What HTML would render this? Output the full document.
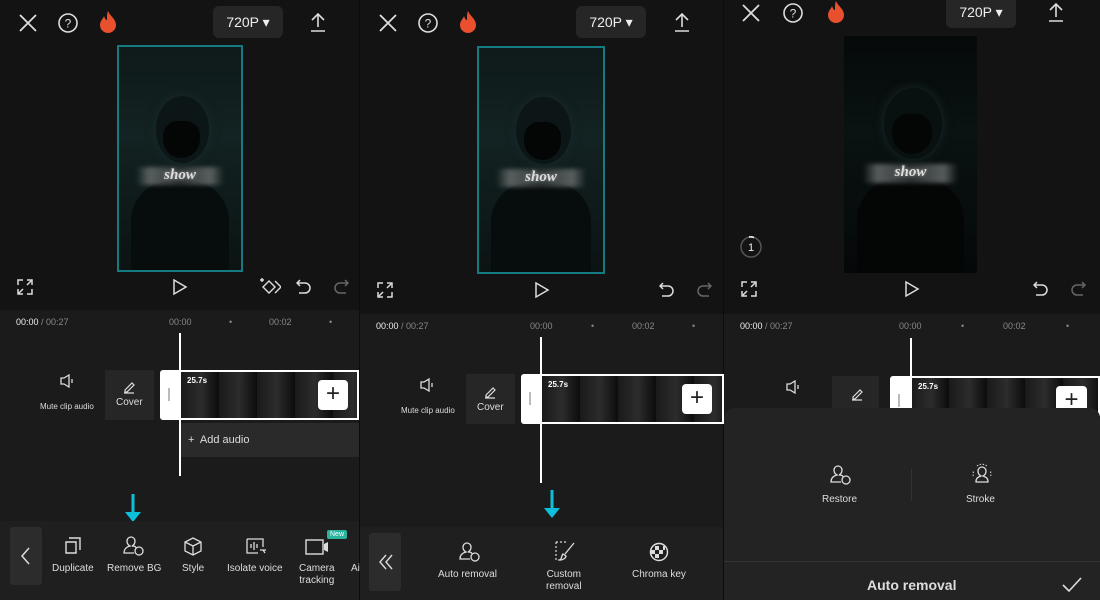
<!DOCTYPE html>
<html><head><meta charset="utf-8"><style>
*{margin:0;padding:0;box-sizing:border-box}
body{width:1100px;height:600px;background:#131313;font-family:"Liberation Sans",sans-serif;color:#ddd;position:relative;overflow:hidden}
.a{position:absolute}
.tl{background:#1b1b1b}
.t{font-size:9px;color:#888}
.lbl{font-size:10px;color:#ddd;text-align:center;position:absolute;white-space:nowrap}
.res{background:#262626;border-radius:6px;color:#eee;font-size:14px;text-align:center;line-height:32px;width:70px;height:32px}
.vid{background:linear-gradient(180deg,#0f1a1a 0%,#132222 40%,#0b1313 100%);overflow:hidden}
.head{position:absolute;left:30%;top:22%;width:44%;height:30%;border-radius:50%;background:#0d1616;box-shadow:0 0 10px #1a2a2a}
.mask{position:absolute;left:36%;top:33%;width:30%;height:17%;border-radius:40% 40% 50% 50%;background:#040606}
.bar{position:absolute;left:14%;top:54%;width:72%;height:8%;background:linear-gradient(90deg,transparent,#6a6f6f 15%,#3a3f3f 50%,#6a6f6f 85%,transparent);filter:blur(2px);opacity:.8}
.show{position:absolute;font:italic bold 15px "Liberation Serif",serif;color:#ddd;text-align:center;width:100%;top:54%;text-shadow:0 0 3px #999}
.body{position:absolute;left:10%;top:60%;width:80%;height:45%;background:#070c0c;border-radius:40% 40% 0 0}
.clip{background:repeating-linear-gradient(90deg,#1a1a1a 0,#2c2c2c 20px,#0c0c0c 38px);border:2px solid #fff;border-left:none}
.plus{background:#fff;border-radius:4px;width:28px;height:28px;color:#222;font-size:24px;text-align:center;line-height:27px}
.handle{background:#fff;border-radius:3px 0 0 3px}
svg{position:absolute}
</style></head><body>

<div class="a tl" style="left:0;top:310px;width:359px;height:217px"></div>
<div class="a tl" style="top:314px;left:360px;width:364px;height:213px"></div>
<div class="a tl" style="left:724px;top:314px;width:376px;height:100px"></div>
<div class="a" style="left:359px;top:0;width:1px;height:600px;background:#0c0c0c"></div>
<div class="a" style="left:723px;top:0;width:1px;height:600px;background:#0c0c0c"></div>

<!-- ========== PANEL 1 ========== -->
<svg style="left:18px;top:13px" width="20" height="20"><path d="M2 2L18 18M18 2L2 18" stroke="#ddd" stroke-width="1.8"/></svg>
<svg style="left:57px;top:12px" width="22" height="22"><circle cx="11" cy="11" r="9" fill="none" stroke="#ddd" stroke-width="1.6"/><text x="11" y="15.5" font-size="12" fill="#ddd" text-anchor="middle" font-family="Liberation Sans">?</text></svg>
<svg style="left:97px;top:10px" width="22" height="24"><path d="M11 1C13 6 19 9 19 15A8 8 0 0 1 3 15C3 11 6 9 7 6C8 9 9 10 10 10C10 6 10 3 11 1Z" fill="#e8502e"/></svg>
<div class="a res" style="left:213px;top:6px">720P ▾</div>
<svg style="left:308px;top:11px" width="20" height="22"><path d="M10 3V16M4 9L10 3L16 9M3 20H17" stroke="#ddd" stroke-width="1.6" fill="none"/></svg>
<div class="a vid" style="left:117px;top:45px;width:126px;height:227px;border:2px solid #157a82"><div class="head"></div><div class="mask"></div><div class="body"></div><div class="bar"></div><div class="show">show</div></div>
<svg style="left:17px;top:279px" width="16" height="16"><path d="M1 6V1H6M10 1H15V6M15 10V15H10M6 15H1V10M2 14L6 10M14 2L10 6" stroke="#ddd" stroke-width="1.5" fill="none"/></svg>
<svg style="left:172px;top:278px" width="16" height="18"><path d="M2 2L14 9L2 16Z" stroke="#ddd" stroke-width="1.5" fill="none"/></svg>
<svg style="left:259px;top:277px" width="22" height="18"><path d="M10 4L16 10L10 16L4 10Z M16 4L22 10L16 16M3 1V5M1 3H5" stroke="#ddd" stroke-width="1.4" fill="none"/></svg>
<svg style="left:296px;top:278px" width="16" height="16"><path d="M4 2L1 5L4 8M1 5H9A5 5 0 0 1 9 15H3" stroke="#ddd" stroke-width="1.5" fill="none"/></svg>
<svg style="left:333px;top:278px" width="16" height="16"><path d="M12 2L15 5L12 8M15 5H7A5 5 0 0 0 7 15H13" stroke="#666" stroke-width="1.5" fill="none"/></svg>
<div class="a t" style="left:16px;top:317px"><span style="color:#eee">00:00</span> / 00:27</div>
<div class="a t" style="left:169px;top:317px">00:00</div><div class="a t" style="left:229px;top:317px">•</div>
<div class="a t" style="left:269px;top:317px">00:02</div><div class="a t" style="left:329px;top:317px">•</div>
<svg style="left:60px;top:374px" width="16" height="14"><path d="M1 4H4L9 1V13L4 10H1Z M12 5V9" stroke="#ddd" stroke-width="1.3" fill="none"/></svg>
<div class="lbl" style="left:40px;top:402px;font-size:8px">Mute clip audio</div>
<div class="a" style="left:105px;top:370px;width:49px;height:50px;background:#262626"></div>
<svg style="left:122px;top:380px" width="14" height="14"><path d="M3 10L10 3L12 5L5 12H3Z M2 13H12" stroke="#ddd" stroke-width="1.2" fill="none"/></svg>
<div class="lbl" style="left:116px;top:397px">Cover</div>
<div class="a handle" style="left:160px;top:370px;width:22px;height:50px"><div class="a" style="left:8px;top:18px;width:2px;height:13px;background:#bbb"></div></div>
<div class="a clip" style="left:181px;top:370px;width:178px;height:50px"></div>
<div class="a" style="left:187px;top:376px;font-size:8px;color:#fff;font-weight:bold">25.7s</div>
<div class="a plus" style="left:318px;top:380px;width:30px;height:30px">+</div>
<div class="a" style="left:181px;top:423px;width:178px;height:34px;background:#2a2a2a;font-size:11px;color:#ddd;line-height:34px;padding-left:7px">+&nbsp; Add audio</div>
<div class="a" style="left:179px;top:333px;width:2px;height:143px;background:#fff"></div>
<svg style="left:124px;top:494px" width="18" height="32"><path d="M9 0V20" stroke="#0cc0dc" stroke-width="3"/><path d="M1 18H17L9 28Z" fill="#0cc0dc"/></svg>
<div class="a" style="left:0;top:521px;width:359px;height:79px;background:#1f1f1f"></div>
<div class="a" style="left:10px;top:527px;width:32px;height:58px;background:#2c2c2c;border-radius:3px"></div>
<svg style="left:20px;top:547px" width="12" height="18"><path d="M9 1L2 9L9 17" stroke="#ddd" stroke-width="1.5" fill="none"/></svg>
<svg style="left:64px;top:537px" width="18" height="18"><path d="M5 1H16V13M2 5H12V16H2Z" stroke="#ddd" stroke-width="1.4" fill="none"/></svg>
<div class="lbl" style="left:52px;top:563px">Duplicate</div>
<svg style="left:121px;top:535px" width="24" height="22"><path d="M10 2A4 4 0 0 1 14 6C14 8 13 10 11 11C14 11 15 12 15 13M10 2A4 4 0 0 0 6 6C6 8 7 10 9 11C5 12 3 14 3 18H13" stroke="#ddd" stroke-width="1.3" fill="none"/><circle cx="18" cy="16" r="4" fill="none" stroke="#ddd" stroke-width="1.3"/></svg>
<div class="lbl" style="left:107px;top:563px">Remove BG</div>
<svg style="left:183px;top:537px" width="20" height="20"><path d="M10 1L18 5V14L10 18L2 14V5Z M2 5L10 9L18 5M10 9V18" stroke="#ddd" stroke-width="1.3" fill="none"/></svg>
<div class="lbl" style="left:182px;top:563px">Style</div>
<svg style="left:245px;top:537px" width="22" height="20"><path d="M2 2H18V10M2 2V16H13M6 7V11M9 5V13M12 7V11M15 13H21M18 13L20 16" stroke="#ddd" stroke-width="1.3" fill="none"/></svg>
<div class="lbl" style="left:227px;top:563px">Isolate voice</div>
<svg style="left:305px;top:538px" width="24" height="18"><rect x="1" y="2" width="17" height="14" fill="none" stroke="#ddd" stroke-width="1.4"/><path d="M19 6L23 4V14L19 12Z" fill="#ddd"/></svg>
<div class="a" style="left:327px;top:530px;font-size:7px;background:#2bb39e;color:#fff;padding:1px 3px;border-radius:2px">New</div>
<div class="lbl" style="left:299px;top:563px;line-height:12px">Camera<br>tracking</div>
<div class="lbl" style="left:351px;top:563px">Ai</div>

<!-- ========== PANEL 2 ========== -->
<svg style="left:378px;top:13px" width="20" height="20"><path d="M2 2L18 18M18 2L2 18" stroke="#ddd" stroke-width="1.8"/></svg>
<svg style="left:417px;top:12px" width="22" height="22"><circle cx="11" cy="11" r="9" fill="none" stroke="#ddd" stroke-width="1.6"/><text x="11" y="15.5" font-size="12" fill="#ddd" text-anchor="middle" font-family="Liberation Sans">?</text></svg>
<svg style="left:457px;top:10px" width="22" height="24"><path d="M11 1C13 6 19 9 19 15A8 8 0 0 1 3 15C3 11 6 9 7 6C8 9 9 10 10 10C10 6 10 3 11 1Z" fill="#e8502e"/></svg>
<div class="a res" style="left:576px;top:6px">720P ▾</div>
<svg style="left:672px;top:11px" width="20" height="22"><path d="M10 3V16M4 9L10 3L16 9M3 20H17" stroke="#ddd" stroke-width="1.6" fill="none"/></svg>
<div class="a vid" style="left:477px;top:46px;width:128px;height:228px;border:2px solid #157a82"><div class="head"></div><div class="mask"></div><div class="body"></div><div class="bar"></div><div class="show">show</div></div>
<svg style="left:377px;top:282px" width="16" height="16"><path d="M1 6V1H6M10 1H15V6M15 10V15H10M6 15H1V10M2 14L6 10M14 2L10 6" stroke="#ddd" stroke-width="1.5" fill="none"/></svg>
<svg style="left:534px;top:281px" width="16" height="18"><path d="M2 2L14 9L2 16Z" stroke="#ddd" stroke-width="1.5" fill="none"/></svg>
<svg style="left:659px;top:281px" width="16" height="16"><path d="M4 2L1 5L4 8M1 5H9A5 5 0 0 1 9 15H3" stroke="#ddd" stroke-width="1.5" fill="none"/></svg>
<svg style="left:696px;top:281px" width="16" height="16"><path d="M12 2L15 5L12 8M15 5H7A5 5 0 0 0 7 15H13" stroke="#666" stroke-width="1.5" fill="none"/></svg>
<div class="a t" style="left:376px;top:321px"><span style="color:#eee">00:00</span> / 00:27</div>
<div class="a t" style="left:530px;top:321px">00:00</div><div class="a t" style="left:591px;top:321px">•</div>
<div class="a t" style="left:632px;top:321px">00:02</div><div class="a t" style="left:692px;top:321px">•</div>
<svg style="left:420px;top:378px" width="16" height="14"><path d="M1 4H4L9 1V13L4 10H1Z M12 5V9" stroke="#ddd" stroke-width="1.3" fill="none"/></svg>
<div class="lbl" style="left:401px;top:406px;font-size:8px">Mute clip audio</div>
<div class="a" style="left:466px;top:374px;width:49px;height:50px;background:#262626"></div>
<svg style="left:483px;top:385px" width="14" height="14"><path d="M3 10L10 3L12 5L5 12H3Z M2 13H12" stroke="#ddd" stroke-width="1.2" fill="none"/></svg>
<div class="lbl" style="left:477px;top:402px">Cover</div>
<div class="a handle" style="left:521px;top:374px;width:22px;height:50px"><div class="a" style="left:8px;top:18px;width:2px;height:13px;background:#bbb"></div></div>
<div class="a clip" style="left:542px;top:374px;width:182px;height:50px"></div>
<div class="a" style="left:548px;top:380px;font-size:8px;color:#fff;font-weight:bold">25.7s</div>
<div class="a plus" style="left:682px;top:384px;width:30px;height:30px">+</div>
<div class="a" style="left:540px;top:337px;width:2px;height:146px;background:#fff"></div>
<svg style="left:543px;top:490px" width="18" height="32"><path d="M9 0V20" stroke="#0cc0dc" stroke-width="3"/><path d="M1 18H17L9 28Z" fill="#0cc0dc"/></svg>
<div class="a" style="left:360px;top:527px;width:363px;height:73px;background:#1f1f1f"></div>
<div class="a" style="left:369px;top:533px;width:32px;height:58px;background:#2c2c2c;border-radius:3px"></div>
<svg style="left:378px;top:554px" width="16" height="16"><path d="M8 1L2 8L8 15M14 1L8 8L14 15" stroke="#ddd" stroke-width="1.4" fill="none"/></svg>
<svg style="left:457px;top:541px" width="24" height="22"><path d="M10 2A4 4 0 0 1 14 6C14 8 13 10 11 11C14 11 15 12 15 13M10 2A4 4 0 0 0 6 6C6 8 7 10 9 11C5 12 3 14 3 18H13" stroke="#ddd" stroke-width="1.3" fill="none"/><circle cx="18" cy="16" r="4" fill="none" stroke="#ddd" stroke-width="1.3"/></svg>
<div class="lbl" style="left:438px;top:569px">Auto removal</div>
<svg style="left:554px;top:540px" width="22" height="22"><path d="M2 2H14M2 2V20H8" stroke="#ddd" stroke-width="1.2" stroke-dasharray="2 2" fill="none"/><path d="M20 3L11 14M9 14C7 16 8 19 6 20C9 20 12 18 12 16Z" stroke="#ddd" stroke-width="1.3" fill="none"/></svg>
<div class="lbl" style="left:546px;top:569px;line-height:12px">Custom<br>removal</div>
<svg style="left:649px;top:542px" width="20" height="20"><circle cx="10" cy="10" r="8.5" fill="none" stroke="#ddd" stroke-width="1.5"/><path d="M6 4H10V8H6ZM10 8H14V12H10ZM6 12H10V16H6ZM2 8H6V12H2ZM14 4H16V8H14Z" fill="#ddd"/></svg>
<div class="lbl" style="left:632px;top:569px">Chroma key</div>

<!-- ========== PANEL 3 ========== -->
<svg style="left:741px;top:3px" width="20" height="20"><path d="M2 2L18 18M18 2L2 18" stroke="#ddd" stroke-width="1.8"/></svg>
<svg style="left:782px;top:2px" width="22" height="22"><circle cx="11" cy="11" r="9" fill="none" stroke="#ddd" stroke-width="1.6"/><text x="11" y="15.5" font-size="12" fill="#ddd" text-anchor="middle" font-family="Liberation Sans">?</text></svg>
<svg style="left:825px;top:0px" width="22" height="24"><path d="M11 1C13 6 19 9 19 15A8 8 0 0 1 3 15C3 11 6 9 7 6C8 9 9 10 10 10C10 6 10 3 11 1Z" fill="#e8502e"/></svg>
<div class="a res" style="left:946px;top:-4px;height:32px;line-height:32px">720P ▾</div>
<svg style="left:1046px;top:1px" width="20" height="22"><path d="M10 3V16M4 9L10 3L16 9M3 20H17" stroke="#ddd" stroke-width="1.6" fill="none"/></svg>
<div class="a vid" style="left:844px;top:36px;width:133px;height:237px;background:linear-gradient(180deg,#050909 0%,#0a1212 40%,#050808 100%)"><div class="head" style="background:#091010"></div><div class="mask"></div><div class="body" style="background:#040606"></div><div class="bar"></div><div class="show">show</div></div>
<svg style="left:739px;top:235px" width="24" height="24"><circle cx="12" cy="12" r="10" fill="none" stroke="#555" stroke-width="1.5"/><path d="M10 2A10 10 0 0 1 15 2.5" stroke="#fff" stroke-width="1.5" fill="none"/><text x="12" y="16" font-size="11" fill="#eee" text-anchor="middle" font-family="Liberation Sans">1</text></svg>
<svg style="left:741px;top:281px" width="16" height="16"><path d="M1 6V1H6M10 1H15V6M15 10V15H10M6 15H1V10M2 14L6 10M14 2L10 6" stroke="#ddd" stroke-width="1.5" fill="none"/></svg>
<svg style="left:904px;top:280px" width="16" height="18"><path d="M2 2L14 9L2 16Z" stroke="#ddd" stroke-width="1.5" fill="none"/></svg>
<svg style="left:1033px;top:280px" width="16" height="16"><path d="M4 2L1 5L4 8M1 5H9A5 5 0 0 1 9 15H3" stroke="#ddd" stroke-width="1.5" fill="none"/></svg>
<svg style="left:1070px;top:280px" width="16" height="16"><path d="M12 2L15 5L12 8M15 5H7A5 5 0 0 0 7 15H13" stroke="#666" stroke-width="1.5" fill="none"/></svg>
<div class="a t" style="left:740px;top:321px"><span style="color:#eee">00:00</span> / 00:27</div>
<div class="a t" style="left:899px;top:321px">00:00</div><div class="a t" style="left:961px;top:321px">•</div>
<div class="a t" style="left:1003px;top:321px">00:02</div><div class="a t" style="left:1066px;top:321px">•</div>
<svg style="left:786px;top:380px" width="16" height="14"><path d="M1 4H4L9 1V13L4 10H1Z M12 5V9" stroke="#ddd" stroke-width="1.3" fill="none"/></svg>
<div class="a" style="left:832px;top:376px;width:47px;height:40px;background:#262626"></div>
<svg style="left:850px;top:387px" width="14" height="14"><path d="M3 10L10 3L12 5L5 12H3Z M2 13H12" stroke="#ddd" stroke-width="1.2" fill="none"/></svg>
<div class="a handle" style="left:890px;top:376px;width:22px;height:40px"><div class="a" style="left:8px;top:18px;width:2px;height:13px;background:#bbb"></div></div>
<div class="a clip" style="left:911px;top:376px;width:189px;height:40px;border-bottom:none"></div>
<div class="a" style="left:918px;top:382px;font-size:8px;color:#fff;font-weight:bold">25.7s</div>
<div class="a plus" style="left:1056px;top:386px;width:31px;height:30px">+</div>
<div class="a" style="left:910px;top:338px;width:2px;height:72px;background:#fff"></div>
<div class="a" style="left:724px;top:408px;width:376px;height:192px;background:#232323;border-radius:10px 10px 0 0"></div>
<div class="a" style="left:911px;top:469px;width:1px;height:32px;background:#333"></div>
<svg style="left:828px;top:464px" width="24" height="22"><path d="M10 2A4 4 0 0 1 14 6C14 8 13 10 11 11C14 11 15 12 15 13M10 2A4 4 0 0 0 6 6C6 8 7 10 9 11C5 12 3 14 3 18H13" stroke="#ddd" stroke-width="1.3" fill="none"/><circle cx="18" cy="16" r="4" fill="none" stroke="#ddd" stroke-width="1.3"/></svg>
<div class="lbl" style="left:822px;top:494px">Restore</div>
<svg style="left:970px;top:462px" width="24" height="24"><path d="M12 5A4 4 0 0 1 16 9C16 11 15 13 13 14C16 15 18 16 18 20H6C6 16 8 15 11 14C9 13 8 11 8 9A4 4 0 0 1 12 5Z" stroke="#ddd" stroke-width="1.3" fill="none"/><path d="M7 4A8 8 0 0 1 17 4M3 14A9 9 0 0 0 3 9M21 14A9 9 0 0 1 21 9" stroke="#ddd" stroke-width="1" stroke-dasharray="1.5 1.5" fill="none"/></svg>
<div class="lbl" style="left:966px;top:494px">Stroke</div>
<div class="a" style="left:724px;top:561px;width:376px;height:1px;background:#333"></div>
<div class="a" style="left:867px;top:577px;font-size:14px;font-weight:bold;color:#ddd">Auto removal</div>
<svg style="left:1061px;top:576px" width="22" height="18"><path d="M2 9L8 15L20 2" stroke="#ddd" stroke-width="1.6" fill="none"/></svg>

</body></html>
